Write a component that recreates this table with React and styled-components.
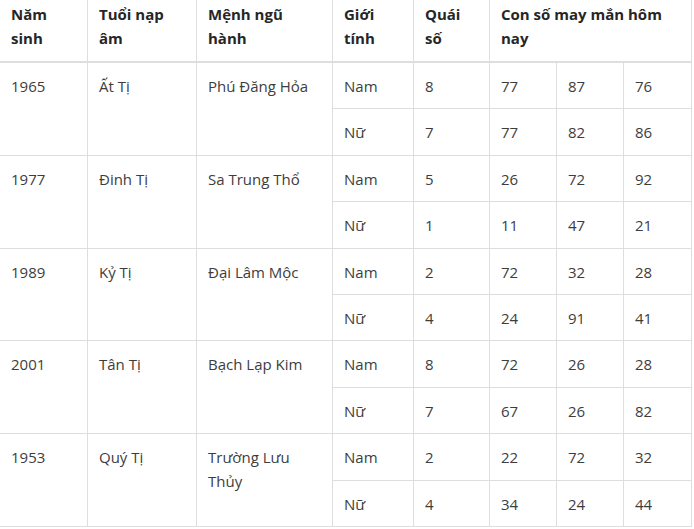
import React from 'react';
import styled, {createGlobalStyle} from 'styled-components';

const GlobalStyle = createGlobalStyle`
  html, body {
    margin: 0;
    padding: 0;
    background: #fff;
  }
  body {
    font-family: "Open Sans", "Liberation Sans", sans-serif;
  }
`;

const Wrapper = styled.div`
  width: 694px;
  height: 529px;
  overflow: hidden;
  background: #fff;
`;

const Table = styled.table`
  border-collapse: collapse;
  table-layout: fixed;
  width: 692px;
  margin-left: -1px;
  color: #3d3d3d;
  font-size: 15px;
  line-height: 24px;
`;

const Col = styled.col`
  width: ${props => props.$w}px;
`;

const HeadCell = styled.th`
  text-align: left;
  vertical-align: top;
  font-weight: 700;
  color: #262626;
  padding: 2px 11px 11px;
  border-left: 1px solid #dedede;
  border-right: 1px solid #dedede;
  border-bottom: 2px solid #dedede;
`;

const Cell = styled.td`
  vertical-align: top;
  padding: 11px 10px 10.4px 11px;
  height: 24px;
  border: 1px solid #dedede;
`;

const widths = [88, 109, 136, 81, 76, 67, 67, 68];

const rows = [
  {year: '1965', tuoi: 'Ất Tị', menh: 'Phú Đăng Hỏa', nam: ['8', '77', '87', '76'], nu: ['7', '77', '82', '86']},
  {year: '1977', tuoi: 'Đinh Tị', menh: 'Sa Trung Thổ', nam: ['5', '26', '72', '92'], nu: ['1', '11', '47', '21']},
  {year: '1989', tuoi: 'Kỷ Tị', menh: 'Đại Lâm Mộc', nam: ['2', '72', '32', '28'], nu: ['4', '24', '91', '41']},
  {year: '2001', tuoi: 'Tân Tị', menh: 'Bạch Lạp Kim', nam: ['8', '72', '26', '28'], nu: ['7', '67', '26', '82']},
  {year: '1953', tuoi: 'Quý Tị', menh: 'Trường Lưu Thủy', nam: ['2', '22', '72', '32'], nu: ['4', '34', '24', '44']},
];

const App = () => {
  return (
    <Wrapper>
      <GlobalStyle/>
      <Table>
        <colgroup>
          {widths.map((w, i) => <Col key={i} $w={w}/>)}
        </colgroup>
        <thead>
        <tr>
          <HeadCell>Năm sinh</HeadCell>
          <HeadCell>Tuổi nạp âm</HeadCell>
          <HeadCell>Mệnh ngũ hành</HeadCell>
          <HeadCell>Giới tính</HeadCell>
          <HeadCell>Quái số</HeadCell>
          <HeadCell colSpan={3}>Con số may mắn hôm nay</HeadCell>
        </tr>
        </thead>
        <tbody>
        {rows.map(r => (
          <React.Fragment key={r.year}>
            <tr>
              <Cell rowSpan={2}>{r.year}</Cell>
              <Cell rowSpan={2}>{r.tuoi}</Cell>
              <Cell rowSpan={2}>{r.menh}</Cell>
              <Cell>Nam</Cell>
              {r.nam.map((n, i) => <Cell key={i}>{n}</Cell>)}
            </tr>
            <tr>
              <Cell>Nữ</Cell>
              {r.nu.map((n, i) => <Cell key={i}>{n}</Cell>)}
            </tr>
          </React.Fragment>
        ))}
        </tbody>
      </Table>
    </Wrapper>
  );
};

export default App;
